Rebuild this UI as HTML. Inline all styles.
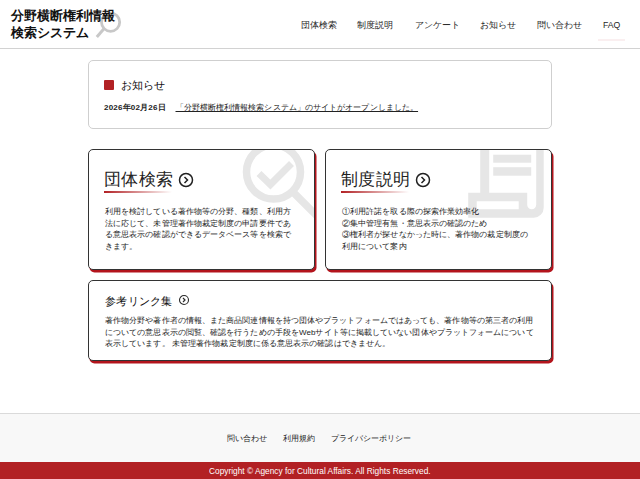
<!DOCTYPE html>
<html lang="ja">
<head>
<meta charset="utf-8">
<style>
*{margin:0;padding:0;box-sizing:border-box}
html,body{width:640px;height:479px;overflow:hidden;background:#fff}
body{position:relative;font-family:"Liberation Sans",sans-serif;color:#333}
.a{position:absolute;white-space:nowrap}
#hdr{position:absolute;left:0;top:0;width:640px;height:49px;border-bottom:1px solid #d2d2d2;background:#fff}
.title{left:11px;top:7px;font-family:"Liberation Serif",serif;font-weight:bold;font-size:13px;line-height:17px;color:#111}
.nav{top:19px;font-size:8.7px;line-height:12px;color:#1e1e1e}
.box{position:absolute;background:#fff}
#notice{position:absolute;left:88px;top:60px;width:464px;height:69px;border:1px solid #cfcfcf;border-radius:5px}
.card{position:absolute;background:#fff;border:1px solid #333;border-radius:5px;box-shadow:1.5px 2.5px 0 #b3141c;overflow:hidden}
.ctitle{font-size:17px;line-height:22px;color:#222;letter-spacing:0.3px}
.uline{position:absolute;height:2px;width:68px;background:linear-gradient(to right,#b22124,rgba(178,33,36,0))}
.desc{font-size:8px;letter-spacing:0.08px;line-height:11.7px;color:#1a1a1a}
#foot{position:absolute;left:0;top:413px;width:640px;height:49px;background:#f8f8f8;border-top:1px solid #dadada}
#copy{position:absolute;left:0;top:462px;width:640px;height:17px;background:#b22124}
</style>
</head>
<body>
<div id="hdr">
  <svg class="a" style="left:0;top:0" width="140" height="48">
    <circle cx="110.6" cy="22.2" r="9.1" fill="none" stroke="#c8c8c8" stroke-width="2.8"/>
    <line x1="104.2" y1="28.6" x2="96.8" y2="37" stroke="#c8c8c8" stroke-width="3"/>
  </svg>
  <div class="a title">分野横断権利情報<br>検索システム</div>
  <div class="a nav" style="left:301px">団体検索</div>
  <div class="a nav" style="left:357px">制度説明</div>
  <div class="a nav" style="left:414.5px">アンケート</div>
  <div class="a nav" style="left:480px">お知らせ</div>
  <div class="a nav" style="left:536.5px">問い合わせ</div>
  <div class="a nav" style="left:603px">FAQ</div>
  <div class="a" style="left:598px;top:39px;width:27px;height:1.5px;background:rgba(178,33,36,0.07)"></div>
</div>

<div id="notice">
  <div class="a" style="left:15px;top:19px;width:10px;height:10px;background:#b22124;border-radius:1px"></div>
  <div class="a" style="left:32px;top:17px;font-size:11px;line-height:14px;color:#111">お知らせ</div>
  <div class="a" style="left:15px;top:41px;font-size:8px;letter-spacing:0.2px;line-height:11px;font-weight:bold;color:#222">2026年02月26日</div>
  <div class="a" style="left:86.5px;top:41px;font-size:8px;letter-spacing:0.085px;line-height:11px;color:#222;text-decoration:underline">「分野横断権利情報検索システム」のサイトがオープンしました。</div>
</div>

<div class="card" style="left:88px;top:149px;width:227px;height:121px">
  <svg class="a" style="left:0;top:0" width="228" height="121">
    <circle cx="184.5" cy="22" r="27" fill="none" stroke="#e6e6e6" stroke-width="7.5"/>
    <line x1="204" y1="42" x2="240" y2="78" stroke="#e6e6e6" stroke-width="7.5"/>
    <polyline points="170,23.5 181.4,34.5 202.5,13.5" fill="none" stroke="#e6e6e6" stroke-width="7"/>
  </svg>
  <div class="a ctitle" style="left:15px;top:18.5px">団体検索</div>
  <svg class="a" style="left:89px;top:22px" width="16" height="16">
    <circle cx="8" cy="8" r="6.5" fill="none" stroke="#222" stroke-width="1.5"/>
    <polyline points="6.5,5 9.5,8 6.5,11" fill="none" stroke="#222" stroke-width="1.5"/>
  </svg>
  <div class="uline" style="left:15px;top:41px"></div>
  <div class="a desc" style="left:16px;top:56px">利用を検討している著作物等の分野、種類、利用方<br>法に応じて、未管理著作物裁定制度の申請要件であ<br>る意思表示の確認ができるデータベース等を検索で<br>きます。</div>
</div>

<div class="card" style="left:325px;top:149px;width:227px;height:121px">
  <svg class="a" style="left:0;top:0" width="227" height="121">
    <g fill="#e6e6e6" transform="translate(-0.8,-0.8)">
      <rect x="155" y="-5" width="9" height="49"/>
      <rect x="168" y="5.5" width="38" height="8"/>
      <rect x="168" y="18" width="38" height="8.5"/>
      <path fill-rule="evenodd" d="M211 -5H218.5V58.5A10 10 0 0 1 208.5 68.5H143V43.5H202V55.5A4.5 4.5 0 0 0 211 55.5Z M151.5 52H193.5V60H151.5Z"/>
    </g>
  </svg>
  <div class="a ctitle" style="left:15px;top:18.5px">制度説明</div>
  <svg class="a" style="left:89px;top:22px" width="16" height="16">
    <circle cx="8" cy="8" r="6.5" fill="none" stroke="#222" stroke-width="1.5"/>
    <polyline points="6.5,5 9.5,8 6.5,11" fill="none" stroke="#222" stroke-width="1.5"/>
  </svg>
  <div class="uline" style="left:15px;top:41px"></div>
  <div class="a desc" style="left:16px;top:56px">①利用許諾を取る際の探索作業効率化<br>②集中管理有無・意思表示の確認のため<br>③権利者が探せなかった時に、著作物の裁定制度の<br>利用について案内</div>
</div>

<div class="card" style="left:88px;top:280px;width:464px;height:81px">
  <div class="a" style="left:16px;top:13px;font-size:11px;line-height:14px;color:#111;letter-spacing:0.3px">参考リンク集</div>
  <svg class="a" style="left:89px;top:13px" width="12" height="12">
    <circle cx="6" cy="6" r="4.5" fill="none" stroke="#2a2a2a" stroke-width="1.1"/>
    <polyline points="5,4 7,6 5,8" fill="none" stroke="#2a2a2a" stroke-width="1.2"/>
  </svg>
  <div class="a desc" style="left:16px;top:34px">著作物分野や著作者の情報、また商品関連情報を持つ団体やプラットフォームではあっても、著作物等の第三者の利用<br>についての意思表示の閲覧、確認を行うための手段をWebサイト等に掲載していない団体やプラットフォームについて<br>表示しています。 未管理著作物裁定制度に係る意思表示の確認はできません。</div>
</div>

<div id="foot">
  <div class="a" style="left:227px;top:19px;font-size:8.2px;line-height:11px;color:#222">問い合わせ</div>
  <div class="a" style="left:283px;top:19px;font-size:8.2px;line-height:11px;color:#222">利用規約</div>
  <div class="a" style="left:331px;top:19px;font-size:8.2px;line-height:11px;color:#222">プライバシーポリシー</div>
</div>
<div id="copy">
  <div class="a" style="left:209px;top:3px;font-size:9px;line-height:12px;color:#fff;transform:scaleX(0.925);transform-origin:0 0">Copyright © Agency for Cultural Affairs. All Rights Reserved.</div>
</div>
</body>
</html>
